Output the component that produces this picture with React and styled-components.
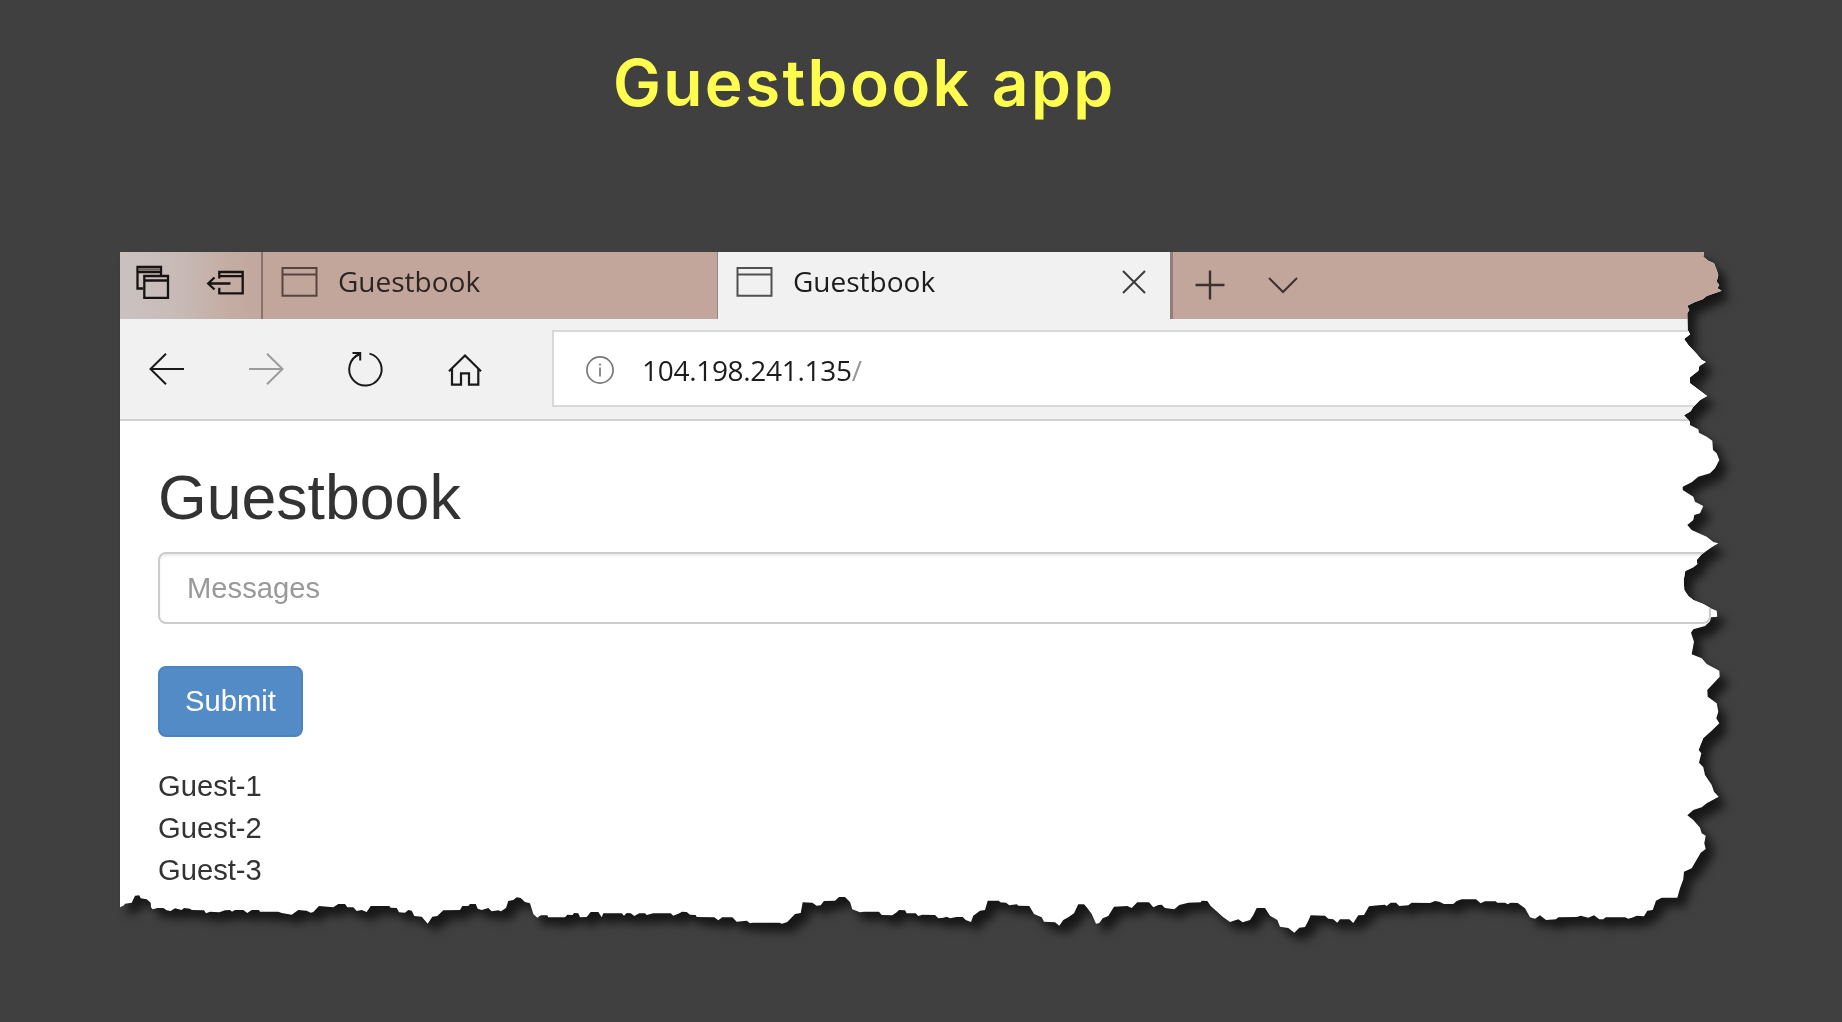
import React from "react";
import styled, { createGlobalStyle } from "styled-components";

const GlobalStyle = createGlobalStyle`
  *, *::before, *::after { box-sizing: border-box; }
  html, body { margin: 0; padding: 0; background: #404040; }
  body { overflow: hidden; }
`;

/* Outline of the torn paper. Each segment is traced at three units per pixel from its own origin. */
const WINDOW = { x: 120, y: 252 };

const rightEdge = [
  { ox: 1640, oy: 240, pts: "192,35 190,50 205,62 222,70 230,90 235,105 230,125 238,135 232,145 245,152 200,168 188,178 165,186 142,197 148,210 142,220 143,270 150,283 132,297 145,315 170,342 185,360 197,366 178,378 175,392 150,412 150,430 180,452 201,468 180,480 160,500 152,514 132,526 150,545 150,555 175,568 177,578 200,590 217,602 219,630 230,640 238,660 225,685 210,700 175,710 155,727 128,740 128,750 160,770 165,785 190,798 180,820 163,825 160,840 142,855 155,870 200,890 220,906 235,910 215,922 185,943 170,960" },
  { ox: 1640, oy: 560, pts: "172,12 160,22 136,33 131,60 133,90 145,108 160,120 190,132 215,146 230,152 232,170 213,172 210,184 195,198 160,208 153,218 162,245 155,283 185,295 200,312 238,332 239,350 202,390 203,410 230,430 235,455 229,475 238,490 215,512 190,535 176,570 184,580 177,608 190,622 195,645 215,675 222,695 236,710 200,730 185,742 160,750 142,766 160,780 180,803 185,820 197,827 193,850 197,867 182,878 155,925 132,935 130,958" },
];

const bottomEdge = [
  { ox: 100, oy: 880, pts: "60,82 72,76 75,71 95,68 105,47 118,46 122,55 140,58 152,68 153,82 158,88 172,84 190,84 200,91 212,93 225,85 245,90 252,84 270,86 275,90 312,91 318,100 330,95 358,97 375,91 390,90 396,95 405,90 430,90 442,99 455,90 477,90 480,95 535,95 545,99 575,104 595,90 620,92 632,98 640,96 657,78 700,82 715,72 735,72 742,82 760,82 770,93 785,90 800,96 812,78 868,78 872,83 890,84 897,97 915,98 925,90 935,92 943,108 965,110 983,131 997,110 1012,108 1030,91 1080,90 1087,78 1105,78 1110,72 1127,72 1133,86 1145,90 1165,84 1175,94 1195,91 1203,94 1218,84 1225,63 1240,60 1250,52 1262,54 1275,66 1290,70 1300,102" },
  { ox: 520, oy: 880, pts: "52,113 62,106 82,106 85,112 135,112 142,104 158,105 162,99 175,100 180,112 200,111 212,96 235,96 245,112 250,100 305,100 312,107 320,99 332,100 343,108 358,100 375,100 380,105 400,100 452,100 460,107 480,99 485,95 500,96 510,104 527,105 530,111 583,112 595,121 607,112 637,112 650,125 680,122 690,130 697,128 778,128 786,131 802,126 825,102 842,99 848,67 877,68 890,77 902,76 912,63 945,62 957,51 975,51 990,66 997,88 1020,97 1032,95 1077,95 1085,105 1117,106 1130,97 1137,90 1155,91 1160,100 1187,100 1195,108 1207,104 1245,105 1255,115 1270,113 1280,110 1290,115 1305,112" },
  { ox: 940, oy: 880, pts: "50,111 68,111 77,120 93,126 100,107 120,92 135,90 143,62 177,62 180,67 198,68 208,76 230,73 235,77 268,78 282,102 305,112 312,125 345,127 358,137 370,120 385,112 402,100 415,73 432,73 440,82 455,102 468,131 478,129 488,115 505,108 522,80 562,78 575,84 592,67 627,67 640,82 655,75 665,74 675,84 703,88 718,75 745,68 782,67 785,62 802,63 812,78 850,112 870,126 895,118 908,127 930,120 940,105 950,84 975,84 990,107 1012,120 1020,140 1045,144 1063,158 1078,143 1095,141 1105,122 1112,106 1155,107 1165,116 1180,118 1192,128" },
  { ox: 1340, oy: 880, pts: "0,118 28,118 40,129 55,106 72,105 87,79 115,76 135,74 140,78 152,68 168,68 178,78 205,76 215,68 270,69 285,63 298,65 312,72 340,72 350,63 365,58 408,58 422,70 435,64 467,64 472,68 495,68 503,73 512,68 533,69 555,85 570,112 585,116 600,106 618,120 648,118 655,112 710,111 722,107 745,113 762,106 778,118 790,118 797,112 855,112 865,116 880,112 890,107 912,109 922,92 938,90 948,62 965,53 1012,53 1020,25" },
];

const trace = (segments) =>
  segments.flatMap(({ ox, oy, pts }) =>
    pts.split(" ").map((p) => {
      const [x, y] = p.split(",").map(Number);
      return `${(ox + x / 3 - WINDOW.x).toFixed(1)}px ${(oy + y / 3 - WINDOW.y).toFixed(1)}px`;
    })
  );

const tornOutline = `polygon(0px 0px, ${[...trace(rightEdge), ...trace(bottomEdge).reverse()].join(", ")})`;

const Slide = styled.main`
  width: 1842px;
  height: 1022px;
  overflow: hidden;
  display: flex;
  flex-direction: column;
  background: #404040;
`;

const SlideTitle = styled.h1`
  margin: 0;
  height: 252px;
  padding: 43px 0 0 613px;
  color: #fffc50;
  font: 600 64px/80px Inter, "Open Sans", sans-serif;
  letter-spacing: 2.35px;
  word-spacing: 2px;
  white-space: nowrap;
`;

const PaperShadow = styled.div`
  margin-left: 120px;
  width: 1602px;
  filter: drop-shadow(8px 9px 5px rgba(0, 0, 0, 0.65));
`;

const BrowserWindow = styled.section`
  width: 1602px;
  height: 684px;
  background: #fff;
  clip-path: ${tornOutline};
`;

const TabStrip = styled.div`
  display: flex;
  height: 67px;
  background: #c2a69c;
`;

const WindowTools = styled.div`
  display: flex;
  align-items: center;
  gap: 38px;
  width: 143px;
  padding: 0 0 6px 16px;
  border-right: 2px solid #88746d;
  background: linear-gradient(90deg, #cac2c0 0%, #c8bbb7 40%, #c4ada4 75%, #c2a89e 100%);
`;

const Tab = styled.div`
  display: flex;
  align-items: center;
  width: ${(p) => (p.$active ? 453 : 454)}px;
  padding: 0 24px 8px 18px;
  color: ${(p) => (p.$active ? "#1c1c1c" : "#2c2523")};
  background: ${(p) => (p.$active ? "#f1f1f1" : "#c2a69c")};
  border-left: ${(p) => (p.$active ? "1px solid #8a8a8a" : "0")};
  svg { color: ${(p) => (p.$active ? "#505050" : "#54453f")}; }
`;

const TabLabel = styled.span`
  flex: 1;
  padding: 0 0 2px 21px;
  font: 400 28px/38px "Open Sans", "Noto Sans", sans-serif;
`;

const TabActions = styled.div`
  display: flex;
  align-items: center;
  gap: 43px;
  flex: 1;
  padding-left: 22px;
  padding-bottom: 2px;
  border-left: 3px solid #937d76;
  color: #3b3230;
`;

const Toolbar = styled.div`
  display: flex;
  height: 102px;
  background: #f1f1f1;
  border-bottom: 2px solid #d0d0d0;
`;

const NavButtons = styled.nav`
  display: flex;
  align-items: center;
  width: 432px;
  padding: 0 0 1px 29px;
  gap: 64.7px;
  color: #1a1a1a;
`;

const AddressBar = styled.div`
  display: flex;
  align-items: center;
  flex: 1;
  height: 77px;
  margin-top: 11px;
  padding: 3px 0 0 32px;
  background: #fff;
  border: 2px solid #d8d8d8;
  border-right: 0;
`;

const Address = styled.span`
  padding: 0 0 1px 28px;
  color: #1c1c1c;
  font: 400 28px/38px "Open Sans", "Noto Sans", sans-serif;
  letter-spacing: -0.3px;
`;

const AddressPath = styled.span`
  color: #999;
`;

const Content = styled.div`
  display: flex;
  flex-direction: column;
  align-items: flex-start;
  padding: 40px 0 0 38px;
  color: #333;
  font: 400 29.2px/41.8px "Liberation Sans", Arial, sans-serif;
`;

const PageHeading = styled.h2`
  margin: 0;
  height: 91px;
  font: 400 62.6px/72px "Liberation Sans", Arial, sans-serif;
`;

const MessageInput = styled.input`
  width: 1553px;
  height: 72px;
  padding: 0 27px;
  border: 2px solid #ccc;
  border-radius: 8px;
  background: #fff;
  box-shadow: inset 0 2px 2px rgba(0, 0, 0, 0.075);
  font: inherit;
  outline: none;
  &::placeholder { color: #999; opacity: 1; }
`;

const SubmitButton = styled.button`
  width: 145px;
  height: 71px;
  margin-top: 42px;
  padding: 0;
  border: 2px solid #4b84bf;
  border-radius: 8px;
  background: #528bc5;
  color: #fff;
  font: inherit;
`;

const GuestList = styled.ul`
  margin: 29px 0 0;
  padding: 0;
  list-style: none;
`;

const Icon = styled.svg`
  display: block;
  flex: none;
  overflow: visible;
  fill: none;
  stroke: ${(p) => p.$color || "currentColor"};
  stroke-width: ${(p) => p.$weight || 2};
`;

const TabsAsideIcon = () => (
  <Icon width="33" height="33" viewBox="0 0 33 33" $color="#171312" $weight={2.3}>
    <path d="M7 22.5H1.5V1H25V9M1.5 6.2H25" />
    <path d="M2.6 3.6H23.9" stroke="#6b5f5b" />
    <path d="M8.3 10H32V31.8H8.3ZM8.3 14.5H32" />
  </Icon>
);

const SetAsideIcon = () => (
  <Icon width="37" height="25" viewBox="0 0 37 25" $color="#171312" $weight={2.3}>
    <path d="M12.3 8.5V2H35.7V23.3H12.3V17.8M12.3 6.2H35.7" />
    <path d="M1 13.5H23.5M7.5 7.5L1.2 13.5L7.5 19.5" />
  </Icon>
);

const PageIcon = () => (
  <Icon width="36" height="30" viewBox="0 0 36 30">
    <path d="M1.5 1H35.5V28.8H1.5ZM1.5 7.5H35.5" />
  </Icon>
);

const CloseIcon = () => (
  <Icon width="24" height="24" viewBox="0 0 24 24" $color="#3c3c3c">
    <path d="M1 1L23 23M23 1L1 23" />
  </Icon>
);

const PlusIcon = () => (
  <Icon width="30" height="30" viewBox="0 0 30 30">
    <path d="M0.5 15H29.5M15 0.5V29.5" strokeWidth="2.4" />
  </Icon>
);

const ChevronIcon = () => (
  <Icon width="30" height="16" viewBox="0 0 30 16">
    <path d="M1 1L15 15L29 1" />
  </Icon>
);

const BackIcon = () => (
  <Icon width="35" height="32" viewBox="0 0 35 32">
    <path d="M35 16H1.5M17 0.8L1.5 16L17 31.2" />
  </Icon>
);

const ForwardIcon = () => (
  <Icon width="35" height="32" viewBox="0 0 35 32" $color="#9c9c9c">
    <path d="M0 16H33.5M18 0.8L33.5 16L18 31.2" />
  </Icon>
);

const ReloadIcon = () => (
  <Icon width="35" height="34" viewBox="0 0 35 34">
    <path d="M21.5 1.6A16.2 16.2 0 1 1 11.5 2.2" />
    <path d="M4.5 1.1H12.2V8.5M12 1.3L6.5 5" />
  </Icon>
);

const HomeIcon = () => (
  <Icon width="34" height="28" viewBox="0 0 34 28" $weight={2.2}>
    <path d="M1 16.2L17 0.5L33 16.2M4 13.5V29.7H13V18.3H21V29.7H30.3V13.5" />
  </Icon>
);

const InfoIcon = () => (
  <Icon width="28" height="28" viewBox="0 0 28 28" $color="#777" $weight={1.7}>
    <circle cx="14" cy="14" r="13.1" />
    <path d="M14 11.5V20.5M14 7.5V9.4" />
  </Icon>
);

const guests = ["Guest-1", "Guest-2", "Guest-3"];

export default function App() {
  return (
    <Slide>
      <GlobalStyle />
      <SlideTitle>Guestbook app</SlideTitle>
      <PaperShadow>
        <BrowserWindow>
          <TabStrip>
            <WindowTools>
              <TabsAsideIcon />
              <SetAsideIcon />
            </WindowTools>
            <Tab>
              <PageIcon />
              <TabLabel>Guestbook</TabLabel>
            </Tab>
            <Tab $active>
              <PageIcon />
              <TabLabel>Guestbook</TabLabel>
              <CloseIcon />
            </Tab>
            <TabActions>
              <PlusIcon />
              <ChevronIcon />
            </TabActions>
          </TabStrip>
          <Toolbar>
            <NavButtons>
              <BackIcon />
              <ForwardIcon />
              <ReloadIcon />
              <HomeIcon />
            </NavButtons>
            <AddressBar>
              <InfoIcon />
              <Address>
                104.198.241.135<AddressPath>/</AddressPath>
              </Address>
            </AddressBar>
          </Toolbar>
          <Content>
            <PageHeading>Guestbook</PageHeading>
            <MessageInput placeholder="Messages" />
            <SubmitButton>Submit</SubmitButton>
            <GuestList>
              {guests.map((guest) => (
                <li key={guest}>{guest}</li>
              ))}
            </GuestList>
          </Content>
        </BrowserWindow>
      </PaperShadow>
    </Slide>
  );
}
